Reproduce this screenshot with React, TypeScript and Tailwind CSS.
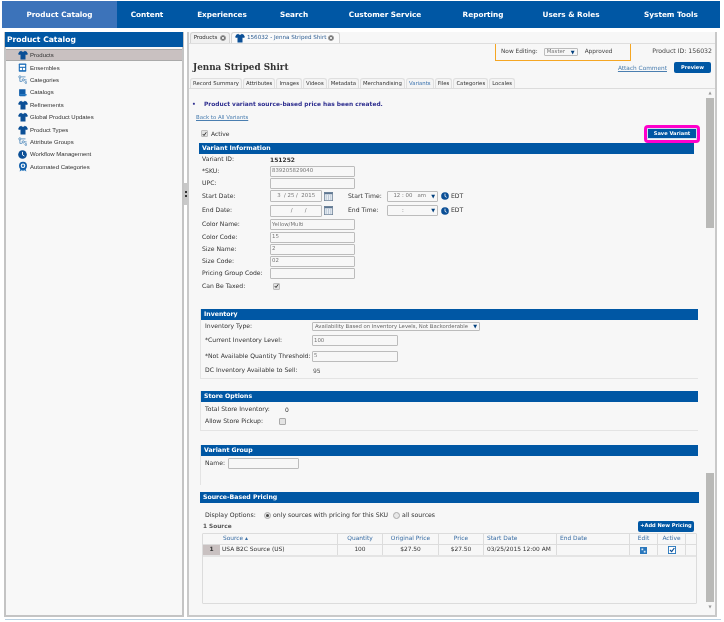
const sans = "font-['DejaVu_Sans',Verdana,sans-serif]";
const side = "font-['Liberation_Sans',Arial,sans-serif]";

function Shirt() {
  return (
    <svg viewBox="0 0 24 24" className="w-[10px] h-[10px]">
      <path d="M8 2 L3 4 L0 10 L5 12 L6 10 V23 H18 V10 L19 12 L24 10 L21 4 L16 2 C15 5 9 5 8 2Z" fill="#0b4f96" />
    </svg>
  );
}
function Ensemble() {
  return (
    <svg viewBox="0 0 24 24" className="w-[9px] h-[9px]">
      <rect x="2" y="1" width="20" height="22" rx="2" fill="#1c6db8" />
      <rect x="5" y="5" width="14" height="5" fill="#fff" />
      <rect x="5" y="13" width="6" height="6" fill="#fff" />
      <rect x="13" y="13" width="6" height="6" fill="#fff" />
    </svg>
  );
}
function Tree() {
  return (
    <svg viewBox="0 0 24 24" className="w-[9px] h-[9px]" fill="none" stroke="#3f7fb5" strokeWidth="2">
      <circle cx="5" cy="5" r="3" />
      <circle cx="14" cy="13" r="3" />
      <circle cx="21" cy="20" r="2.5" />
      <path d="M5 8 V17 H11 M9 5 H20 M17 13 H23" />
    </svg>
  );
}
function Book() {
  return (
    <svg viewBox="0 0 24 24" className="w-[9px] h-[9px]">
      <path d="M3 3 H20 V22 H6 Q3 22 3 19Z" fill="#0f5ca8" />
      <path d="M3 18 Q3 16 6 16 H23 V20 H6" fill="#2a7cc4" />
    </svg>
  );
}
function Clock({ s = "w-[9px] h-[9px]" }: { s?: string }) {
  return (
    <svg viewBox="0 0 24 24" className={s}>
      <circle cx="12" cy="12" r="11.5" fill="#0b4f96" />
      <path d="M12 5 V13 L17 16" stroke="#fff" strokeWidth="2.4" fill="none" />
    </svg>
  );
}
function Badge() {
  return (
    <svg viewBox="0 0 24 24" className="w-[10px] h-[11px]">
      <path d="M6 15 L4 24 L9 21 L12 23 L15 21 L20 24 L18 15Z" fill="#2a78bd" />
      <circle cx="12" cy="10" r="9.5" fill="#0f5ca8" />
      <circle cx="12" cy="10" r="5.5" fill="#fff" />
      <circle cx="12" cy="10" r="3" fill="#2a78bd" />
    </svg>
  );
}
function CloseDot() {
  return (
    <svg viewBox="0 0 12 12" className="w-[6px] h-[6px] shrink-0">
      <circle cx="6" cy="6" r="5.5" fill="#777" />
      <path d="M3.5 3.5 L8.5 8.5 M8.5 3.5 L3.5 8.5" stroke="#fff" strokeWidth="1.6" />
    </svg>
  );
}
function Cal() {
  return (
    <svg viewBox="0 0 12 12" className="w-[9px] h-[9px] shrink-0">
      <rect x="0.5" y="0.5" width="11" height="11" fill="#e8eef4" stroke="#6b7f95" />
      <rect x="0.5" y="0.5" width="11" height="2.5" fill="#5d7691" />
      <path d="M3 4 V11 M6 4 V11 M9 4 V11" stroke="#9fb0c2" strokeWidth="0.8" />
    </svg>
  );
}
function Check({ size = "w-[7px] h-[7px]" }: { size?: string }) {
  return (
    <span className={`${size} flex items-center justify-center border border-[#bdbdbd] rounded-[1px] bg-[#e2e2e2] shrink-0`}>
      <svg viewBox="0 0 10 10" className="w-[6px] h-[6px]">
        <path d="M1.5 5 L4 8 L8.5 1.5" stroke="#222" strokeWidth="1.8" fill="none" />
      </svg>
    </span>
  );
}

const navItems: [string, string][] = [
  ["Product Catalog", "w-[115px] bg-[#3c73ba]"],
  ["Content", "w-[60px]"],
  ["Experiences", "w-[90px]"],
  ["Search", "w-[54px]"],
  ["Customer Service", "w-[128px]"],
  ["Reporting", "w-[68px]"],
  ["Users & Roles", "w-[108px]"],
  ["System Tools", "w-[92px]"],
];

const sideItems: [string, () => React.ReactNode][] = [
  ["Products", () => <Shirt />],
  ["Ensembles", () => <Ensemble />],
  ["Categories", () => <Tree />],
  ["Catalogs", () => <Book />],
  ["Refinements", () => <Shirt />],
  ["Global Product Updates", () => <Shirt />],
  ["Product Types", () => <Shirt />],
  ["Attribute Groups", () => <Tree />],
  ["Workflow Management", () => <Clock />],
  ["Automated Categories", () => <Badge />],
];

const subTabs = ["Record Summary", "Attributes", "Images", "Videos", "Metadata", "Merchandising", "Variants", "Files", "Categories", "Locales"];

function Bar({ title, cls }: { title: string; cls: string }) {
  return (
    <div className={`${cls} bg-[#0057a4] text-white font-bold text-[6.2px] leading-none flex items-center pl-[3px] ${sans}`}>
      {title}
    </div>
  );
}

function Field({ value = "", w = "w-[85px]", h = "h-[11px]" }: { value?: string; w?: string; h?: string }) {
  return (
    <div className={`${w} ${h} border border-[#bcbcbc] rounded-[1px] bg-[#f7f7f7] text-[5.4px] text-[#777] flex items-center pl-[1px] leading-none whitespace-pre`}>
      {value}
    </div>
  );
}

function Row({ label, h, children, lw = "w-[68px]" }: { label: string; h: string; children?: React.ReactNode; lw?: string }) {
  return (
    <div className={`flex items-center ${h}`}>
      <span className={`${lw} shrink-0 whitespace-nowrap text-[6.1px] text-[#333] leading-none`}>{label}</span>
      {children}
    </div>
  );
}

function TimeSelect({ children }: { children: React.ReactNode }) {
  return (
    <div className="w-[51px] h-[11px] border border-[#bcbcbc] rounded-[1px] bg-[#f7f7f7] flex items-center justify-between px-[2px] text-[5.4px] text-[#777] leading-none whitespace-pre">
      {children}
      <span className="text-[5px] text-[#003f7d]">▼</span>
    </div>
  );
}

const cols = "grid grid-cols-[17px_117px_45px_56px_45px_73px_73px_28px_28px_12px]";

export default function App() {
  return (
    <div className={`w-[724px] h-[622px] bg-white overflow-hidden flex flex-col pt-px pl-[2px] blur-[0.35px] ${sans}`}>
      <nav className="h-[27px] w-[718px] bg-[#0057a4] flex shrink-0">
        {navItems.map(([t, c]) => (
          <div key={t} className={`${c} h-full flex items-center justify-center text-white font-bold text-[7.3px] leading-none whitespace-nowrap`}>
            {t}
          </div>
        ))}
      </nav>

      <div className="flex mt-[4px] h-[585px]">
        {/* left panel */}
        <aside className="ml-[2px] w-[180px] border-x-2 border-b-2 border-[#c4c4c4] bg-[#f8f8f8] shrink-0 flex flex-col">
          <div className="h-[15px] -mx-[1px] bg-[#0057a4] text-white font-bold text-[7.6px] flex items-center pl-[2px] leading-none whitespace-nowrap">
            Product Catalog
          </div>
          <div className={`pt-[2px] grid auto-rows-[12.4px] ${side}`}>
            {sideItems.map(([t, I], i) => (
              <div key={t} className={`flex items-center text-[6px] leading-none text-[#333] whitespace-nowrap ${i === 0 ? "bg-[#c9c1c1] border-y border-[#aaa]" : ""}`}>
                <span className="ml-[11px] w-[11px] flex justify-center mr-[2px]">{I()}</span>
                {t}
              </div>
            ))}
          </div>
        </aside>

        {/* splitter */}
        <div className="w-[3px] shrink-0 flex flex-col justify-start">
          <div className="mt-[151px] h-[22px] w-[3px] bg-[#c8c8c8] flex flex-col items-center justify-center gap-[2px]">
            <span className="w-[2px] h-[2px] bg-[#333]" />
            <span className="w-[2px] h-[2px] bg-[#333]" />
          </div>
        </div>

        {/* main panel */}
        <main className="w-[530px] border-2 border-t-0 border-[#c9c9c9] bg-[#f7f7f7] flex flex-col shrink-0">
          {/* tabs */}
          <div className="h-[12px] flex items-end gap-[1px] pl-[1px] border-b border-[#dedede] shrink-0">
            <div className="h-[11px] w-[40px] bg-[#f0f0f0] border border-b-0 border-[#d4d4d4] rounded-t-[3px] flex items-center justify-center gap-[3px] text-[5.5px] leading-none text-[#333]">
              Products <CloseDot />
            </div>
            <div className="h-[11px] w-[109px] bg-[#f9f9f9] border border-b-0 border-[#d4d4d4] rounded-t-[3px] flex items-center pl-[3px] gap-[2px] text-[5.6px] leading-none text-[#2b5c92] whitespace-nowrap">
              <Shirt /> 156032 - Jenna Striped Shirt <CloseDot />
            </div>
          </div>
          {/* header row 1 */}
          <div className="h-[17px] flex justify-end shrink-0">
            <div className="w-[136px] h-[17px] border-x border-b-[1.5px] border-[#f5a623] flex items-center pl-[5px] text-[5.8px] text-[#444] leading-none">
              <span>Now Editing:</span>
              <span className="ml-[6px] w-[34px] h-[8px] border border-[#bcbcbc] rounded-[1px] flex items-center justify-between px-[2px] text-[#777] text-[5.4px]">
                Master <span className="text-[5px] text-[#003f7d]">▼</span>
              </span>
              <span className="ml-[7px]">Approved</span>
            </div>
            <div className="w-[84px] pt-[3px] text-[6.2px] text-[#444] text-right pr-[3px] leading-[8px] whitespace-nowrap">Product ID: 156032</div>
          </div>
          {/* header row 2 */}
          <div className="h-[17px] flex items-start justify-between shrink-0">
            <h1 className="pl-[4px] pt-[0px] font-['DejaVu_Serif',Georgia,serif] font-bold text-[8.8px] leading-[12px] text-[#333]">Jenna Striped Shirt</h1>
            <div className="flex items-start pr-[4px]">
              <span className="text-[5.8px] underline text-[#4a7eb0] leading-[14px]">Attach Comment</span>
              <span className="ml-[7px] mt-[1px] w-[37px] h-[11px] bg-[#0057a4] rounded-[2px] text-white font-bold text-[5.1px] flex items-center justify-center leading-none">Preview</span>
            </div>
          </div>
          {/* sub tabs */}
          <div className="h-[11px] flex items-end pl-[1px] border-b border-[#dcdcdc] gap-[1px] shrink-0">
            {subTabs.map((t) => (
              <div key={t} className={`h-[10px] px-[2px] bg-[#f4f4f4] border-x border-t border-[#dfdfdf] rounded-t-[3px] flex items-center text-[5.35px] leading-none whitespace-nowrap ${t === "Variants" ? "text-[#3a72ae]" : "text-[#333]"}`}>
                {t}
              </div>
            ))}
          </div>

          {/* scroll area */}
          <div className="flex-1 flex min-h-0">
            <div className="w-[517px] shrink-0 pl-[10px] flex flex-col">
              <div className="h-[11px] shrink-0" />
              <div className="-ml-[7px] h-[10px] flex items-center text-[5.9px] font-bold text-[#2e2e8f] leading-none whitespace-nowrap">
                <span className="w-[12px]">•</span>Product variant source-based price has been created.
              </div>
              <div className="-ml-[3px] mt-[3px] h-[10px] flex items-center text-[5.4px] underline text-[#4a7eb0] leading-none">Back to All Variants</div>
              {/* active row */}
              <div className="mt-[1px] h-[19px] flex items-center justify-between pr-[12px]">
                <div className="flex items-center gap-[3px] ml-[2px] text-[6px] text-[#333] leading-none"><Check /> Active</div>
                <div className="mr-[-6px] w-[56px] h-[18px] border-[3px] border-[#ff00cc] rounded-[4px] flex items-center justify-center">
                  <span className="w-[50px] h-[11px] bg-[#0057a4] border border-[#cfe0f0] rounded-[1px] text-white text-[5.1px] font-bold flex items-center justify-center leading-none">Save Variant</span>
                </div>
              </div>

              {/* Variant info */}
              <Bar title="Variant Information" cls="w-[495px] h-[11px] shrink-0" />
              <div className="pl-[3px] h-[155px] shrink-0">
                <Row label="Variant ID:" h="h-[11px]"><span className="text-[6px] font-bold text-[#333]">151252</span></Row>
                <Row label="*SKU:" h="h-[12px]"><Field value="839205829040" /></Row>
                <Row label="UPC:" h="h-[12px]"><Field /></Row>
                <div className="flex items-center h-[14px]">
                  <span className="w-[68px] text-[6.1px] text-[#333] leading-none">Start Date:</span>
                  <Field value="   3  / 25 /  2015" w="w-[52px]" h="h-[12px]" />
                  <span className="ml-[2px]"><Cal /></span>
                  <span className="ml-[15px] w-[39px] text-[6.1px] text-[#333] leading-none whitespace-nowrap">Start Time:</span>
                  <TimeSelect>{"  12 : 00   am"}</TimeSelect>
                  <span className="ml-[3px]"><Clock s="w-[8px] h-[8px]" /></span>
                  <span className="ml-[2px] text-[6.1px] text-[#333] leading-none">EDT</span>
                </div>
                <div className="flex items-center h-[15px]">
                  <span className="w-[68px] text-[6.1px] text-[#333] leading-none">End Date:</span>
                  <Field value="           /       /" w="w-[52px]" h="h-[12px]" />
                  <span className="ml-[2px]"><Cal /></span>
                  <span className="ml-[15px] w-[39px] text-[6.1px] text-[#333] leading-none whitespace-nowrap">End Time:</span>
                  <TimeSelect><span className="ml-[12px]">:</span></TimeSelect>
                  <span className="ml-[3px]"><Clock s="w-[8px] h-[8px]" /></span>
                  <span className="ml-[2px] text-[6.1px] text-[#333] leading-none">EDT</span>
                </div>
                <Row label="Color Name:" h="h-[13px]"><Field value="Yellow/Multi" /></Row>
                <Row label="Color Code:" h="h-[12px]"><Field value="15" /></Row>
                <Row label="Size Name:" h="h-[12px]"><Field value="2" /></Row>
                <Row label="Size Code:" h="h-[12px]"><Field value="02" /></Row>
                <Row label="Pricing Group Code:" h="h-[13px]"><Field /></Row>
                <Row label="Can Be Taxed:" h="h-[12px]"><span className="ml-[3px] block"><Check /></span></Row>
              </div>

              {/* Inventory */}
              <div className="ml-[1px] w-[498px] border-l border-b border-[#e4e4e4] shrink-0">
                <Bar title="Inventory" cls="h-[11px]" />
                <div className="pl-[4px] h-[58px]">
                  <Row label="Inventory Type:" h="h-[13px]" lw="w-[107px]">
                    <div className="w-[168px] h-[9px] border border-[#bcbcbc] rounded-[1px] flex items-center justify-between px-[2px] text-[5.3px] text-[#666] leading-none whitespace-nowrap">
                      Availability Based on Inventory Levels, Not Backorderable
                      <span className="text-[5px] text-[#003f7d]">▼</span>
                    </div>
                  </Row>
                  <Row label="*Current Inventory Level:" h="h-[15px]" lw="w-[107px]"><Field value="100" w="w-[86px]" /></Row>
                  <Row label="*Not Available Quantity Threshold:" h="h-[16px]" lw="w-[107px]"><Field value="5" w="w-[86px]" /></Row>
                  <Row label="DC Inventory Available to Sell:" h="h-[13px]" lw="w-[108px]"><span className="text-[6px] text-[#555]">95</span></Row>
                </div>
              </div>

              {/* Store options */}
              <div className="ml-[1px] mt-[12px] w-[498px] border-l border-b border-[#e4e4e4] shrink-0">
                <Bar title="Store Options" cls="h-[11px]" />
                <div className="pl-[4px] h-[28px]">
                  <Row label="Total Store Inventory:" h="h-[14px]" lw="w-[80px]"><span className="text-[6px] text-[#333]">0</span></Row>
                  <Row label="Allow Store Pickup:" h="h-[11px]" lw="w-[74px]">
                    <span className="w-[7px] h-[7px] border border-[#aaa] rounded-[1px] bg-[#e4e4e4]" />
                  </Row>
                </div>
              </div>

              {/* Variant group */}
              <div className="ml-[1px] mt-[14px] w-[498px] border-l border-[#e4e4e4] shrink-0">
                <Bar title="Variant Group" cls="h-[11px]" />
                <div className="pl-[4px] h-[29px]">
                  <Row label="Name:" h="h-[14px]" lw="w-[23px]"><Field w="w-[71px]" /></Row>
                </div>
              </div>

              {/* Source-based pricing */}
              <div className="ml-[1px] mt-[7px] w-[499px] shrink-0">
                <Bar title="Source-Based Pricing" cls="h-[11px]" />
                <div className="h-[9px] mt-[8px] pl-[5px] flex items-center text-[6.2px] text-[#333] leading-none whitespace-nowrap">
                  <span className="w-[59px]">Display Options:</span>
                  <span className="w-[7px] h-[7px] rounded-full border border-[#aaa] bg-[#e8e8e8] flex items-center justify-center mr-[2px]"><span className="w-[3px] h-[3px] rounded-full bg-[#444]" /></span>
                  <span className="mr-[5px]">only sources with pricing for this SKU</span>
                  <span className="w-[7px] h-[7px] rounded-full border border-[#aaa] bg-[#e8e8e8] mr-[2px]" />
                  <span>all sources</span>
                </div>
                <div className="h-[12px] flex items-center justify-between pl-[3px] pr-[5px]">
                  <span className="text-[5.8px] font-bold text-[#555] leading-none pt-[2px]">1 Source</span>
                  <span className="w-[56px] h-[11px] bg-[#0057a4] rounded-[2px] text-white text-[5.1px] font-bold flex items-center justify-center whitespace-nowrap leading-none">+Add New Pricing</span>
                </div>
                <div className="ml-[2px] mt-[1px] w-[495px] h-[71px] border border-[#dcdcdc] rounded-[1px] text-[5.9px] leading-none">
                  <div className={`${cols} h-[11px] border-b border-[#dcdcdc] text-[#3a6ea5] text-center`}>
                    {["", "Source ▴", "Quantity", "Original Price", "Price", "Start Date", "End Date", "Edit", "Active", ""].map((c, i) => (
                      <div key={i} className={`flex items-center ${i === 1 || i === 5 || i === 6 ? "justify-start pl-[3px]" : "justify-center"} ${i > 1 ? "border-l border-[#dcdcdc]" : ""}`}>{c}</div>
                    ))}
                  </div>
                  <div className={`${cols} h-[12px] border-b-2 border-[#e4e4e4] text-[#333]`}>
                    <div className="bg-[#c9c1c1] flex items-center justify-center font-bold">1</div>
                    <div className="flex items-center pl-[2px] whitespace-nowrap">USA B2C Source (US)</div>
                    <div className="flex items-center justify-center border-l border-[#dcdcdc]">100</div>
                    <div className="flex items-center justify-center border-l border-[#dcdcdc]">$27.50</div>
                    <div className="flex items-center justify-center border-l border-[#dcdcdc]">$27.50</div>
                    <div className="flex items-center pl-[3px] border-l border-[#dcdcdc] whitespace-nowrap">03/25/2015 12:00 AM</div>
                    <div className="border-l border-[#dcdcdc]" />
                    <div className="flex items-center justify-center border-l border-[#dcdcdc]">
                      <svg viewBox="0 0 12 12" className="w-[7px] h-[7px]"><rect width="12" height="12" fill="#2a78bd" /><rect x="2.5" y="2.5" width="3" height="3" fill="#d8e8f5" /><rect x="6.5" y="6.5" width="3" height="3" fill="#d8e8f5" /></svg>
                    </div>
                    <div className="flex items-center justify-center border-l border-[#dcdcdc]">
                      <svg viewBox="0 0 12 12" className="w-[8px] h-[8px]"><rect x="0.7" y="0.7" width="10.6" height="10.6" fill="#fff" stroke="#2a78bd" strokeWidth="1.4" /><path d="M3 6 L5.5 8.5 L9.5 3" stroke="#0b4f96" strokeWidth="1.8" fill="none" /></svg>
                    </div>
                    <div className="border-l border-[#dcdcdc]" />
                  </div>
                </div>
              </div>
            </div>

            {/* scrollbar */}
            <div className="w-[8px] shrink-0 flex flex-col items-center text-[#999] leading-none">
              <span className="h-[9px] pt-[2px] text-[4px]">▲</span>
              <span className="w-[8px] h-[130px] bg-[#b9b9b7]" />
              <span className="h-[245px]" />
              <span className="w-[8px] h-[129px] bg-[#b9b9b7]" />
              <span className="h-[9px] pt-[3px] text-[4px]">▼</span>
            </div>
          </div>
        </main>
      </div>
      <div className="mt-[2px] ml-[3px] w-[716px] h-[1px] bg-[#b9cfe0]" />
    </div>
  );
}
